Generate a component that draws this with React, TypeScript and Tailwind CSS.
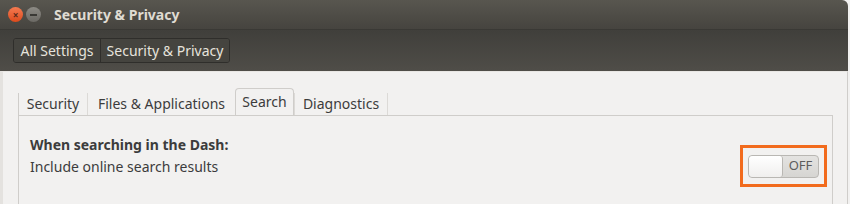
import React from "react";

const font = { fontFamily: '"Noto Sans", "Open Sans", sans-serif' };

function TitleBar() {
  return (
    <div className="flex h-[29px] items-center rounded-tr-[6px] bg-gradient-to-b from-[#58564f] to-[#46443f] pl-[8px]">
      <div className="flex h-[15px] w-[15px] items-center justify-center rounded-full bg-gradient-to-b from-[#f47a50] to-[#dc4a1a] text-[10px] font-bold leading-none text-[#5a2a1a]">
        ×
      </div>
      <div className="ml-[3px] flex h-[15px] w-[15px] items-center justify-center rounded-full bg-gradient-to-b from-[#8d8b85] to-[#6b6964]">
        <div className="h-[2px] w-[7px] bg-[#3a3935]" />
      </div>
      <div className="ml-[13px] text-[14px] font-bold text-[#dfdbd2]">Security &amp; Privacy</div>
    </div>
  );
}

function Toolbar() {
  return (
    <div className="flex h-[42px] items-center border-t border-[#3a3935] bg-gradient-to-b from-[#403f3b] to-[#4f4d48] pl-[13px]">
      <div className="flex h-[25px] overflow-hidden rounded-[3px] border border-[#2f2e2b] text-[14px] text-[#e6e3dc] shadow-[inset_0_1px_0_rgba(255,255,255,0.08)]">
        <div className="flex w-[86px] items-center justify-center bg-[#45443f]">All Settings</div>
        <div className="flex w-[129px] items-center justify-center border-l border-[#2f2e2b] bg-[#45443f]">
          Security &amp; Privacy
        </div>
      </div>
    </div>
  );
}

const tabs = [
  { label: "Security", w: "w-[69px]" },
  { label: "Files & Applications", w: "w-[148px]" },
  { label: "Search", w: "w-[59px]", active: true },
  { label: "Diagnostics", w: "w-[93px]" },
];

function Tabs() {
  return (
    <div className="flex h-[26px] items-end">
      {tabs.map((t) =>
        t.active ? (
          <div
            key={t.label}
            className={`${t.w} -mb-px flex h-[28px] items-center justify-center rounded-t-[4px] border border-b-0 border-[#cfcdca] bg-[#f2f1f0] pb-[3px] text-[14px] text-[#3c3c3c]`}
          >
            {t.label}
          </div>
        ) : (
          <div
            key={t.label}
            className={`${t.w} flex h-[22px] items-center justify-center border-l border-[#dcdad7] pb-[1px] text-[14px] text-[#3c3c3c] first:border-l-[#cfcdca]`}
          >
            {t.label}
          </div>
        )
      )}
      <div className="h-[22px] border-l border-[#dcdad7]" />
    </div>
  );
}

function Switch() {
  return (
    <div className="flex h-[42px] w-[87px] items-center justify-center border-[3px] border-[#f26b1d]">
      <div className="flex h-[23px] w-[71px] overflow-hidden rounded-[4px] border border-[#b9b7b3] bg-gradient-to-b from-[#e4e3e1] to-[#d6d5d2]">
        <div className="h-full w-[34px] rounded-[3px] border-r border-[#b9b7b3] bg-gradient-to-b from-[#ffffff] to-[#f0efee]" />
        <div className="flex flex-1 items-center justify-center text-[13px] text-[#5c5c5c]">OFF</div>
      </div>
    </div>
  );
}

export default function App() {
  return (
    <div className="h-[204px] w-[850px] overflow-hidden bg-[#f2f1f0]" style={font}>
      <div className="w-[848px]">
        <TitleBar />
        <Toolbar />
      </div>
      <div className="flex h-[133px] w-[848px] border-l-[3px] border-r border-t border-l-[#e4e2df] border-r-[#cfcdca] border-t-[#e9e7e4] bg-[#f2f1f0]">
        <div className="flex flex-1 flex-col pl-[15px] pr-[14px] pt-[17px]">
          <Tabs />
          <div className="flex flex-1 items-start justify-between border-l border-r border-t border-[#cfcdca] pl-[11px] pr-[5px]">
            <div className="mt-[18px] flex flex-col text-[14px] leading-[22px] text-[#3c3c3c]">
              <span className="font-bold">When searching in the Dash:</span>
              <span>Include online search results</span>
            </div>
            <div className="mt-[29px]">
              <Switch />
            </div>
          </div>
        </div>
      </div>
    </div>
  );
}
